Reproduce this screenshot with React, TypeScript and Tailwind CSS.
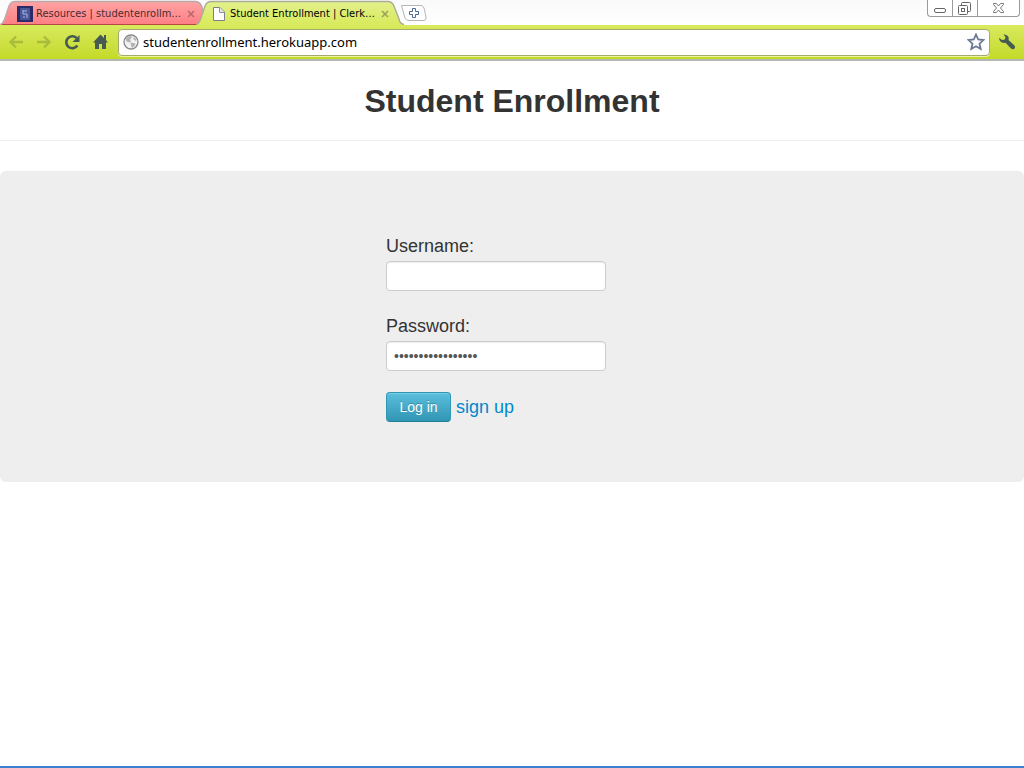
import { useState } from "react";

function Tab({ title, active, className }: { title: string; active?: boolean; className: string }) {
  return (
    <div className={"relative flex h-[25px] items-center " + className}>
      {active ? (
        <svg className="absolute inset-0 h-full w-full" viewBox="0 0 208 25" preserveAspectRatio="none" aria-hidden="true">
          <defs>
            <linearGradient id="tab-active" x1="0" y1="0" x2="0" y2="1">
              <stop offset="0" stopColor="#e3f08c" />
              <stop offset="1" stopColor="#d8ea5c" />
            </linearGradient>
          </defs>
          <path d="M0 25C3 24 4 21 5 18L9 6Q11 1.500 15 1.500H192Q196 1.500 198 6L203 19Q204 24 208 25Z" fill="url(#tab-active)" />
          <path
            d="M0 24.500C3 24 4 21 5 18L9 6Q11 1.500 15 1.500H192Q196 1.500 198 6L203 19Q204 24 208 24.500"
            fill="none"
            stroke="#a9ad94"
            strokeWidth="1.400"
          />
        </svg>
      ) : (
        <svg className="absolute inset-0 h-full w-full" viewBox="0 0 204 25" preserveAspectRatio="none" aria-hidden="true">
          <defs>
            <linearGradient id="tab-idle" x1="0" y1="0" x2="0" y2="1">
              <stop offset="0" stopColor="#ffa3a3" />
              <stop offset="1" stopColor="#ff7e84" />
            </linearGradient>
          </defs>
          <path d="M0 25C3 24 4 21 5 18L9 6Q11 1.500 15 1.500H195Q200 1.500 202 7L203 12L200 25Z" fill="url(#tab-idle)" />
          <path d="M0 24.500C3 24 4 21 5 18L9 6Q11 1.500 15 1.500H195Q200 1.500 202 7L203 12" fill="none" stroke="#b9a9aa" strokeWidth="1.400" />
          <path d="M2 24.500H200" stroke="#b5493f" />
        </svg>
      )}
      <div className="relative flex w-full items-center pt-[2px]">
        {active ? (
          <svg className="mr-[3px] h-4 w-4 shrink-0" viewBox="0 0 16 16" aria-hidden="true">
            <path d="M2.500 1.500H9L13.500 6V14.500H2.500Z" fill="#fff" stroke="#7d8288" />
            <path d="M8.500 1.500V6.500H13.500" fill="#e4e6e8" stroke="#8d9298" />
          </svg>
        ) : (
          <svg className="mr-[3px] h-4 w-4 shrink-0" viewBox="0 0 16 16" aria-hidden="true">
            <rect width="16" height="16" fill="#2a2c68" />
            <rect x="3" y="2" width="10" height="12" rx="1" fill="#4a5699" />
            <path d="M6 4V8M6 5H10M6 8H10V12M8 11H6" stroke="#aab6e2" fill="none" />
          </svg>
        )}
        <span className={"min-w-0 flex-1 whitespace-nowrap text-[11px] leading-4 " + (active ? "text-black" : "text-[#4a2a2d]")}>
          {title}
        </span>
        <button type="button" aria-label="Close tab" className="h-3 w-3 shrink-0">
          <svg className="h-3 w-3" viewBox="0 0 12 12" aria-hidden="true">
            <path d="M3 3L9 9M9 3L3 9" stroke={active ? "#98a05a" : "#b5686c"} strokeWidth="1.500" />
          </svg>
        </button>
      </div>
    </div>
  );
}

function WindowControls() {
  return (
    <div className="ml-auto mr-1 flex h-[17px] overflow-hidden rounded-b-[4px] border border-t-0 border-[#9a9a9a] bg-white">
      <button type="button" aria-label="Minimize" className="w-[25px] border-r border-[#9a9a9a]">
        <svg className="h-4 w-6" viewBox="0 0 24 16" aria-hidden="true">
          <rect x="6.500" y="8.500" width="11" height="4" rx="1.500" fill="#fff" stroke="#666" />
        </svg>
      </button>
      <button type="button" aria-label="Restore" className="w-[25px] border-r border-[#9a9a9a]">
        <svg className="h-4 w-6" viewBox="0 0 24 16" aria-hidden="true">
          <rect x="8.500" y="2.500" width="9" height="9" rx="1" fill="#fff" stroke="#666" />
          <rect x="5.500" y="5.500" width="9" height="9" rx="1" fill="#fff" stroke="#666" />
          <rect x="8.500" y="8.500" width="3" height="3" fill="#fff" stroke="#666" />
        </svg>
      </button>
      <button type="button" aria-label="Close window" className="w-[41px]">
        <svg className="h-4 w-10" viewBox="0 0 40 16" aria-hidden="true">
          <path
            d="M15.500 3.500H18.500L20.500 6L22.500 3.500H25.500V4.500L22.500 8L25.500 11.500V12.500H22.500L20.500 10L18.500 12.500H15.500V11.500L18.500 8L15.500 4.500Z"
            fill="#fff"
            stroke="#777"
          />
        </svg>
      </button>
    </div>
  );
}

function Toolbar() {
  const [url, setUrl] = useState("studentenrollment.herokuapp.com");
  return (
    <div className="flex h-9 items-center border-b-2 border-[#b4b8b4] bg-linear-to-b from-[#d8ea5c] to-[#c4da26] pl-2 pr-2">
      <button type="button" aria-label="Back" className="mr-3 h-4 w-4">
        <svg className="h-4 w-4" viewBox="0 0 16 16" aria-hidden="true">
          <path d="M8 2.500L2.500 8L8 13.500M3 8H15" fill="none" stroke="#a9bc3c" strokeWidth="2.400" />
        </svg>
      </button>
      <button type="button" aria-label="Forward" className="mr-3 h-4 w-4">
        <svg className="h-4 w-4" viewBox="0 0 16 16" aria-hidden="true">
          <path d="M8 2.500L13.500 8L8 13.500M1 8H13" fill="none" stroke="#a9bc3c" strokeWidth="2.400" />
        </svg>
      </button>
      <button type="button" aria-label="Reload" className="mr-3 h-4 w-4">
        <svg className="h-4 w-4" viewBox="0 0 16 16" aria-hidden="true">
          <path d="M13.300 11.500A6 6 0 1 1 12.500 4" fill="none" stroke="#465a52" strokeWidth="2.600" />
          <path d="M15.500 1V8H8.500Z" fill="#465a52" />
        </svg>
      </button>
      <button type="button" aria-label="Home" className="mr-[6px] h-4 w-5">
        <svg className="h-4 w-5" viewBox="0 0 20 16" aria-hidden="true">
          <path d="M8.500 0.500L1 8.500H3V15H7V10H10V15H14V8.500H16L14 6V1H12V4Z" fill="#465a52" />
        </svg>
      </button>
      <div className="flex h-[27px] min-w-0 flex-1 items-center rounded-[4px] border border-[#a3ab6c] bg-white pl-1 pr-1 shadow-[0_1px_0_#e9f3a4]">
        <svg className="mr-1 h-4 w-4 shrink-0" viewBox="0 0 16 16" aria-hidden="true">
          <circle cx="8" cy="8" r="7" fill="#f2f2f2" stroke="#8a8a8a" strokeWidth="1.300" />
          <path d="M2.500 5Q4.500 2 8 2L9 3.500L7 5.500L8 7.500L6.500 8.500L3.500 7.500ZM7.500 8.500L12.500 9.500L11.500 12L9 14L8 11.500ZM10.500 2.800L13.500 5.500L13 7L10.500 5.500Z" fill="#b4b4b4" />
        </svg>
        <input
          aria-label="Address"
          value={url}
          onChange={(e) => setUrl(e.target.value)}
          className="min-w-0 flex-1 bg-transparent font-['Noto_Sans',sans-serif] text-[13px] leading-5 text-black outline-none"
        />
        <button type="button" aria-label="Bookmark this page" className="h-[18px] w-[18px]">
          <svg className="h-[18px] w-[18px]" viewBox="0 0 18 18" aria-hidden="true">
            <path
              d="M9 1.500L11.200 6.500L16.500 7L12.500 10.700L13.700 16L9 13.200L4.300 16L5.500 10.700L1.500 7L6.800 6.500Z"
              fill="#fff"
              stroke="#6b7790"
              strokeWidth="1.800"
            />
          </svg>
        </button>
      </div>
      <button type="button" aria-label="Settings" className="ml-2 h-[18px] w-[18px]">
        <svg className="h-[18px] w-[18px]" viewBox="0 0 18 18" aria-hidden="true">
          <path
            d="M5.500 1.500Q9 1 10.500 4Q11 5.500 10.500 7L16.500 12.500Q18 15 15.500 16.200Q14 16.500 13 15.500L7.500 9.800Q4 10.500 2 8Q1 6.500 1.200 4.800L4 7L6.800 6.500L7.500 4Z"
            fill="#465a52"
          />
        </svg>
      </button>
    </div>
  );
}

const field =
  "block h-[30px] w-[220px] rounded-[4px] border border-[#cccccc] bg-white px-[7px] text-[14px] leading-5 text-[#555555] shadow-[inset_0_1px_1px_rgba(0,0,0,0.075)] outline-none";

function LoginForm() {
  const [username, setUsername] = useState("");
  const [password, setPassword] = useState("studentenrollment");
  return (
    <form className="mx-auto w-[252px] text-[18px] leading-[30px] text-[#333333]" onSubmit={(e) => e.preventDefault()}>
      <label htmlFor="username" className="block">Username:</label>
      <input id="username" type="text" className={field} value={username} onChange={(e) => setUsername(e.target.value)} />
      <label htmlFor="password" className="mt-5 block">Password:</label>
      <input id="password" type="password" className={field} value={password} onChange={(e) => setPassword(e.target.value)} />
      <div className="mt-[21px] flex items-center gap-[5px]">
        <button
          type="submit"
          className="h-[30px] w-[65px] rounded-[4px] border border-[#2f96b4] border-b-[#24809a] bg-linear-to-b from-[#5bc0de] to-[#2f96b4] text-[14px] leading-5 text-white shadow-[inset_0_1px_0_rgba(255,255,255,0.2)] text-shadow-[0_-1px_0_rgba(0,0,0,0.25)]"
        >
          Log in
        </button>
        <a href="#signup" className="text-[#0088cc]">sign up</a>
      </div>
    </form>
  );
}

export default function App() {
  return (
    <div className="flex min-h-screen flex-col border-b-2 border-[#3f7fd0] bg-white font-['Liberation_Sans',Arial,sans-serif]">
      <header className="font-['DejaVu_Sans_Condensed','DejaVu_Sans',sans-serif]">
        <div className="flex h-[25px] bg-linear-to-b from-[#fafafa] to-white">
          <Tab title="Resources | studentenrollm…" className="w-[204px] pl-[17px] pr-[7px]" />
          <Tab title="Student Entrollment | Clerk…" active className="-ml-2 w-[208px] pl-[15px] pr-[13px]" />
          <button type="button" aria-label="New tab" className="-ml-1 h-[25px] w-7">
            <svg className="h-[25px] w-7" viewBox="0 0 28 25" aria-hidden="true">
              <path d="M1.500 5.500H21Q23 5.500 24 8L26 17Q26.500 20.500 24 20.500H9Q6 20.500 5 18Z" fill="#fff" stroke="#b5b5b5" />
              <path d="M12.500 8.500H15.500V11.500H18.500V14.500H15.500V17.500H12.500V14.500H9.500V11.500H12.500Z" fill="#fff" stroke="#4e6a95" />
            </svg>
          </button>
          <WindowControls />
        </div>
        <Toolbar />
      </header>
      <main>
        <h1 className="border-b border-[#eeeeee] pb-[19px] pt-[21px] text-center text-[32px] font-bold leading-[39px] text-[#333333]">
          Student Enrollment
        </h1>
        <section className="mt-[30px] rounded-[6px] bg-[#eeeeee] py-[60px]">
          <LoginForm />
        </section>
      </main>
    </div>
  );
}
